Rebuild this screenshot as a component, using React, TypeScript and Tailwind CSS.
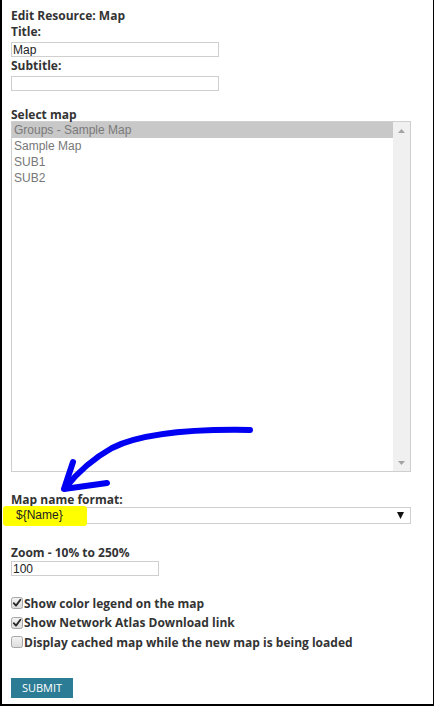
import React from "react";

const sans = "font-['Open_Sans',sans-serif]";
const arial = "font-['Liberation_Sans',Arial,sans-serif]";

function Check({ checked }: { checked: boolean }) {
  return (
    <svg width="12" height="12" viewBox="0 0 12 12" className="shrink-0 mt-[1.5px]">
      <defs>
        <linearGradient id={checked ? "cbg1" : "cbg0"} x1="0" y1="0" x2="0" y2="1">
          <stop offset="0" stopColor="#f4f4f4" />
          <stop offset="1" stopColor="#dcdcdc" />
        </linearGradient>
      </defs>
      <rect x="0.5" y="0.5" width="11" height="11" rx="2" fill={`url(#${checked ? "cbg1" : "cbg0"})`} stroke="#a6a6a6" />
      {checked && (
        <path d="M2.8 6.2 L5 8.6 L9.4 2.8" fill="none" stroke="#2a2a2a" strokeWidth="1.9" strokeLinecap="round" strokeLinejoin="round" />
      )}
    </svg>
  );
}

export default function App() {
  const items = ["Groups - Sample Map", "Sample Map", "SUB1", "SUB2"];
  return (
    <div className={`relative w-[434px] h-[706px] bg-white border-l-2 border-r border-b-2 border-black pl-[9px] pt-[8px] text-[12px] text-[#333] ${sans}`}>
      <div className="h-[16px] leading-[16px] font-bold">Edit Resource: Map</div>
      <div className="h-[16px] leading-[16px] font-bold">Title:</div>
      <input
        readOnly
        defaultValue="Map"
        className={`block mt-[2px] h-[15px] w-[208px] border border-[#cfcfcf] px-[1px] py-0 text-[12px] leading-[13px] text-[#222] outline-none ${arial}`}
      />
      <div className="mt-[1px] h-[16px] leading-[16px] font-bold">Subtitle:</div>
      <input
        readOnly
        defaultValue=""
        className={`block mt-[2px] h-[15px] w-[208px] border border-[#cfcfcf] px-[1px] py-0 text-[12px] leading-[13px] outline-none ${arial}`}
      />
      <div className="mt-[16px] h-[14px] leading-[15px] font-bold">Select map</div>
      <div className="flex h-[351px] w-[400px] border border-[#cfcfcf]">
        <div className={`flex-1 flex flex-col text-[12px] text-[#777] ${arial}`}>
          {items.map((t, i) => (
            <div key={t} className={`h-[16px] leading-[16px] pl-[2px] ${i === 0 ? "bg-[#c8c8c8] text-[#7a7a7a]" : ""}`}>
              {t}
            </div>
          ))}
        </div>
        <div className="w-[17px] bg-[#f0f0f0] flex flex-col justify-between">
          <div className="h-[17px] flex items-center justify-center">
            <svg width="7" height="4" viewBox="0 0 7 4"><polygon points="3.5,0 7,4 0,4" fill="#a3a3a3" /></svg>
          </div>
          <div className="h-[17px] flex items-center justify-center">
            <svg width="7" height="4" viewBox="0 0 7 4"><polygon points="0,0 7,0 3.5,4" fill="#a3a3a3" /></svg>
          </div>
        </div>
      </div>

      <div className="mt-[20px] h-[15px] leading-[15px] font-bold">Map name format:</div>
      <div className="relative flex items-center justify-between h-[17px] w-[400px] border border-[#cfcfcf] pl-[4px] pr-[6px]">
        <div className="absolute left-[-9px] top-[-2px] w-[84px] h-[20px] rounded-[3px] bg-[#ffff00]" />
        <span className={`relative text-[12px] leading-[15px] text-[#222] ${arial}`}>{"${Name}"}</span>
        <svg width="7" height="7" viewBox="0 0 7 7" className="relative">
          <polygon points="0,0 7,0 3.5,7" fill="#111" />
        </svg>
      </div>

      <div className="mt-[21px] h-[15px] leading-[15px] font-bold">Zoom - 10% to 250%</div>
      <input
        readOnly
        defaultValue="100"
        className={`block mt-[1px] h-[15px] w-[148px] border border-[#cfcfcf] px-[1px] py-0 text-[12px] leading-[13px] text-[#222] outline-none ${arial}`}
      />

      <div className="mt-[19.5px] flex flex-col">
        {[
          ["Show color legend on the map", true],
          ["Show Network Atlas Download link", true],
          ["Display cached map while the new map is being loaded", false],
        ].map(([label, c]) => (
          <div key={label as string} className="flex items-start h-[19.5px]">
            <Check checked={c as boolean} />
            <span className="ml-[1px] leading-[15px] font-bold">{label as string}</span>
          </div>
        ))}
      </div>

      <button className="mt-[24px] h-[20px] w-[62px] bg-[#2c7c95] text-white text-[11px] leading-[20px] text-center">
        SUBMIT
      </button>

      <svg className="absolute left-0 top-0 pointer-events-none" width="434" height="706" viewBox="0 0 434 706">
        <path
          d="M248 430 C 190 429, 140 433, 110 448 C 92 458, 76 472, 63 488"
          fill="none"
          stroke="#0000f2"
          strokeWidth="6"
          strokeLinecap="round"
          strokeLinejoin="round"
        />
        <path
          d="M71 462 L 62 489 L 105 483"
          fill="none"
          stroke="#0000f2"
          strokeWidth="6"
          strokeLinecap="round"
          strokeLinejoin="round"
        />
      </svg>
    </div>
  );
}
